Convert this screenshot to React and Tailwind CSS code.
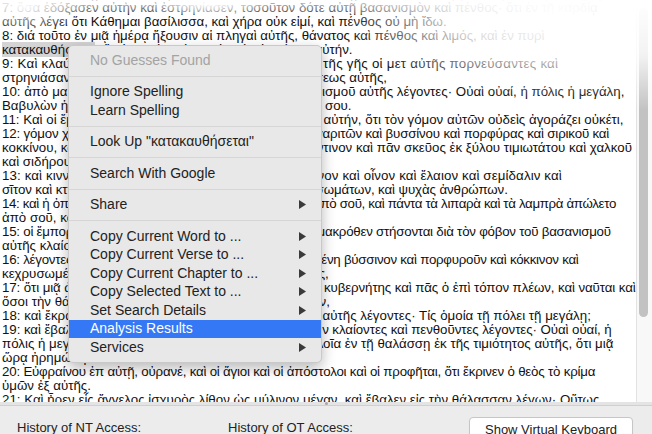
import React from "react";

// c = per-line letter spacing so the line ends where the reference does
const lines = [
  { t: "6: ἀπόδοτε αὐτῇ ὡς καὶ αὐτὴ ἀπέδωκεν, καὶ διπλώσατε αὐτῇ διπλᾶ κατὰ τὰ ἔργα αὐτῆς· ἐν τῷ ποτηρίῳ" },
  { t: "7: ὅσα ἐδόξασεν αὐτὴν καὶ ἐστρηνίασεν, τοσοῦτον δότε αὐτῇ βασανισμὸν καὶ πένθος· ὅτι ἐν τῇ καρδίᾳ" },
  { t: "αὐτῆς λέγει ὅτι Κάθημαι βασίλισσα, καὶ χήρα οὐκ εἰμί, καὶ πένθος οὐ μὴ ἴδω." },
  { t: "8: διά τοῦτο ἐν μιᾷ ἡμέρᾳ ἥξουσιν αἱ πληγαὶ αὐτῆς, θάνατος καὶ πένθος καὶ λιμός, καὶ ἐν πυρὶ" },
  { sel: true },
  { t: "9: Καὶ κλαύσονται καὶ κόψονται ἐπ αὐτὴν οἱ βασιλεῖς τῆς γῆς οἱ μετ αὐτῆς πορνεύσαντες καὶ", c: "tracking-[0.25px]" },
  { t: "στρηνιάσαντες, ὅταν βλέπωσιν τὸν καπνὸν τῆς πυρώσεως αὐτῆς," },
  { t: "10: ἀπὸ μακρόθεν ἑστηκότες διὰ τὸν φόβον τοῦ βασανισμοῦ αὐτῆς λέγοντες· Οὐαὶ οὐαί, ἡ πόλις ἡ μεγάλη," },
  { t: "Βαβυλὼν ἡ πόλις ἡ ἰσχυρά, ὅτι μιᾷ ὥρᾳ ἦλθεν ἡ κρίσις σου." },
  { t: "11: Καὶ οἱ ἔμποροι τῆς γῆς κλαίουσιν καὶ πενθοῦσιν ἐπ αὐτήν, ὅτι τὸν γόμον αὐτῶν οὐδεὶς ἀγοράζει οὐκέτι," },
  { t: "12: γόμον χρυσοῦ καὶ ἀργύρου καὶ λίθου τιμίου καὶ μαργαριτῶν καὶ βυσσίνου καὶ πορφύρας καὶ σιρικοῦ καὶ", c: "tracking-[-0.17px]" },
  { t: "κοκκίνου, καὶ πᾶν ξύλον θύϊνον καὶ πᾶν σκεῦος ἐλεφάντινον καὶ πᾶν σκεῦος ἐκ ξύλου τιμιωτάτου καὶ χαλκοῦ" },
  { t: "καὶ σιδήρου καὶ μαρμάρου," },
  { t: "13: καὶ κιννάμωμον καὶ θυμιάματα καὶ μύρον καὶ λίβανον καὶ οἶνον καὶ ἔλαιον καὶ σεμίδαλιν καὶ", c: "tracking-[0.12px]" },
  { t: "σῖτον καὶ κτήνη καὶ πρόβατα· καὶ ἵππων καὶ ῥεδῶν καὶ σωμάτων, καὶ ψυχὰς ἀνθρώπων.", c: "tracking-[-0.1px]" },
  { t: "14: καὶ ἡ ὀπώρα τῆς ἐπιθυμίας τῆς ψυχῆς σου ἀπῆλθεν ἀπὸ σοῦ, καὶ πάντα τὰ λιπαρὰ καὶ τὰ λαμπρὰ ἀπώλετο", c: "tracking-[-0.34px]" },
  { t: "ἀπὸ σοῦ, καὶ οὐκέτι οὐ μὴ εὕρῃς αὐτά." },
  { t: "15: οἱ ἔμποροι τούτων, οἱ πλουτήσαντες ἀπ αὐτῆς, ἀπὸ μακρόθεν στήσονται διὰ τὸν φόβον τοῦ βασανισμοῦ", c: "tracking-[-0.23px]" },
  { t: "αὐτῆς κλαίοντες καὶ πενθοῦντες," },
  { t: "16: λέγοντες· Οὐαὶ οὐαί, ἡ πόλις ἡ μεγάλη, ἡ περιβεβλημένη βύσσινον καὶ πορφυροῦν καὶ κόκκινον καὶ", c: "tracking-[-0.25px]" },
  { t: "κεχρυσωμένη ἐν χρυσίῳ καὶ λίθῳ τιμίῳ καὶ μαργαρίταις," },
  { t: "17: ὅτι μιᾷ ὥρᾳ ἠρημώθη ὁ τοσοῦτος πλοῦτος. Καὶ πᾶς κυβερνήτης καὶ πᾶς ὁ ἐπὶ τόπον πλέων, καὶ ναῦται καὶ", c: "tracking-[-0.1px]" },
  { t: "ὅσοι τὴν θάλασσαν ἐργάζονται, ἀπὸ μακρόθεν ἔστησαν," },
  { t: "18: καὶ ἔκραζον βλέποντες τὸν καπνὸν τῆς πυρώσεως αὐτῆς λέγοντες· Τίς ὁμοία τῇ πόλει τῇ μεγάλῃ;" },
  { t: "19: καὶ ἔβαλον χοῦν ἐπὶ τὰς κεφαλὰς αὐτῶν, καὶ ἔκραζον κλαίοντες καὶ πενθοῦντες λέγοντες· Οὐαὶ οὐαί, ἡ", c: "tracking-[-0.07px]" },
  { t: "πόλις ἡ μεγάλη, ἐν ᾗ ἐπλούτησαν πάντες οἱ ἔχοντες πλοῖα ἐν τῇ θαλάσσῃ ἐκ τῆς τιμιότητος αὐτῆς, ὅτι μιᾷ" },
  { t: "ὥρᾳ ἠρημώθη." },
  { t: "20: Εὐφραίνου ἐπ αὐτῇ, οὐρανέ, καὶ οἱ ἅγιοι καὶ οἱ ἀπόστολοι καὶ οἱ προφῆται, ὅτι ἔκρινεν ὁ θεὸς τὸ κρίμα", c: "tracking-[-0.2px]" },
  { t: "ὑμῶν ἐξ αὐτῆς." },
  { t: "21: Καὶ ἦρεν εἷς ἄγγελος ἰσχυρὸς λίθον ὡς μύλινον μέγαν, καὶ ἔβαλεν εἰς τὴν θάλασσαν λέγων· Οὕτως" },
];

const menu = [
  { label: "No Guesses Found", disabled: true },
  { sep: true },
  { label: "Ignore Spelling" },
  { label: "Learn Spelling" },
  { sep: true },
  { label: 'Look Up "κατακαυθήσεται"' },
  { sep: true },
  { label: "Search With Google" },
  { sep: true },
  { label: "Share", sub: true },
  { sep: true },
  { label: "Copy Current Word to ...", sub: true },
  { label: "Copy Current Verse to ...", sub: true },
  { label: "Copy Current Chapter to ...", sub: true },
  { label: "Copy Selected Text to ...", sub: true },
  { label: "Set Search Details", sub: true },
  { label: "Analysis Results", active: true },
  { label: "Services", sub: true },
];

function Arrow({ white }) {
  return (
    <svg width="7" height="9" viewBox="0 0 7 9">
      <path d="M0 0 L7 4.5 L0 9 Z" fill={white ? "#fff" : "#3a3a3a"} />
    </svg>
  );
}

function ContextMenu() {
  return (
    <div className="absolute left-[68px] top-[45px] w-[254px] rounded-[5px] bg-[#e8e8e8] border border-[#c9c9c9] shadow-[0_5px_14px_rgba(0,0,0,0.28)] py-[5px] text-[14px] text-[#222]">
      {menu.map((item, i) =>
        item.sep ? (
          <div key={i} className="h-[13px] flex items-center">
            <div className="h-[1px] w-full bg-[#d6d6d6]" />
          </div>
        ) : (
          <div
            key={i}
            className={
              "h-[18.5px] flex items-center justify-between pl-[21px] pr-[15px] " +
              (item.active ? "bg-[#3478f6] text-white" : item.disabled ? "text-[#a3a3a3]" : "")
            }
          >
            <span>{item.label}</span>
            {item.sub && <Arrow white={item.active} />}
          </div>
        )
      )}
    </div>
  );
}

export default function App() {
  return (
    <div className="relative w-[652px] h-[434px] overflow-hidden bg-white flex flex-col font-['Liberation_Sans',Arial,sans-serif]">
      <div className="flex h-[402px]">
        <div className="relative flex-1 overflow-hidden text-[13.3px] leading-[14px] text-[#111]">
          <div className="-mt-[13px] pl-[2px]">
            {lines.map((l, i) =>
              l.sel ? (
                <div key={i} className="whitespace-nowrap">
                  <span className="bg-[#d4d4d4]">κατακαυθήσεται</span>· ὅτι ἰσχυρὸς Κύριος ὁ θεὸς ὁ κρίνων αὐτήν.
                </div>
              ) : (
                <div key={i} className={"whitespace-nowrap " + (l.c || "")}>{l.t}</div>
              )
            )}
          </div>
          {/* fading at the top edge */}
          <div className="absolute left-0 top-0 w-full h-[14px] bg-gradient-to-b from-white/80 to-white/20" />
          <div className="absolute left-[-40px] top-[-20px] w-[130px] h-[54px] bg-[radial-gradient(closest-side,rgba(255,255,255,0.95),rgba(255,255,255,0))]" />
          <div className="absolute left-[150px] top-[-10px] w-[120px] h-[28px] bg-[radial-gradient(closest-side,rgba(255,255,255,0.95),rgba(255,255,255,0))]" />
          <div className="absolute left-[340px] top-[-70px] w-[440px] h-[170px] bg-[radial-gradient(closest-side,rgba(255,255,255,1),rgba(255,255,255,0.85)_45%,rgba(255,255,255,0))]" />
        </div>
        <div className="relative w-[16px] border-l border-[#e2e2e2] bg-[#f8f8f8] pt-[8px]">
          <div className="ml-[2px] w-[9px] h-[309px] rounded-full bg-[#c2c2c2]" />
          <div className="absolute left-[-1px] top-0 w-[17px] h-[110px] bg-gradient-to-b from-white via-white/80 to-white/0" />
        </div>
      </div>
      <div className="h-[10px] bg-[#e4e4e4] border-b border-[#d0d0d0] flex items-center justify-center">
        <div className="w-[3px] h-[3px] rounded-full bg-[#a8a8a8]" />
      </div>
      <div className="flex-1 bg-[#ececec] flex items-start pt-[11px] text-[13px] text-[#222]">
        <span className="ml-[17px] mt-[1px] w-[211px]">History of NT Access:</span>
        <span className="mt-[1px] flex-1">History of OT Access:</span>
        <div className="mr-[19px] w-[164px] h-[22px] rounded-[4px] bg-white border border-[#c6c6c6] shadow-[0_1px_1px_rgba(0,0,0,0.1)] flex justify-center pt-[2px]">
          Show Virtual Keyboard
        </div>
      </div>
      <ContextMenu />
    </div>
  );
}
